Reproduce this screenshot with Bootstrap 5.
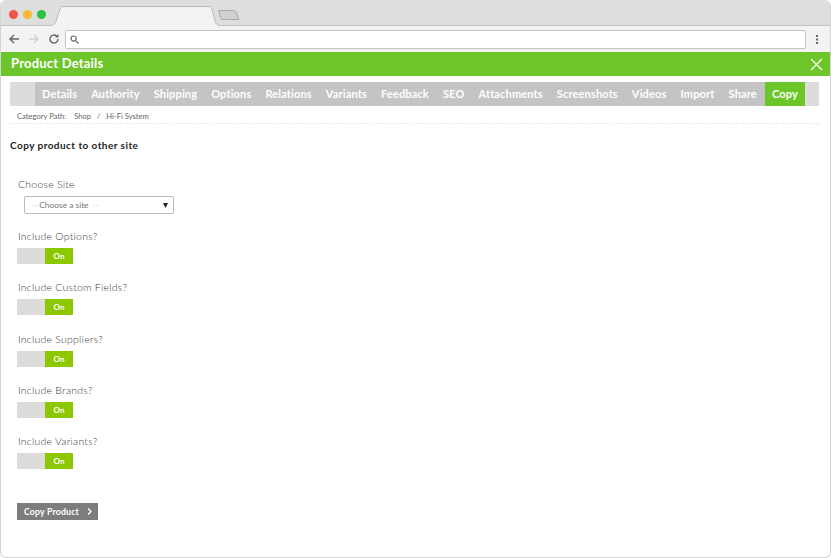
<!doctype html>
<html lang="en">

<head>
  <meta charset="utf-8">
  <meta name="viewport" content="width=device-width, initial-scale=1">
  <title>Product Details</title>

  <link href="https://cdn.jsdelivr.net/npm/bootstrap@5.3.0/dist/css/bootstrap.min.css" rel="stylesheet">

  <style>
    html, body {
      height: 100%;
      background: #fff;
    }

    body {
      font-family: Lato, "Open Sans", sans-serif;
      color: #555;
      overflow: hidden;
    }

    .browser-frame {
      height: 558px;
      border: 1px solid #d4d4d4;
      border-top: 0;
      border-radius: 6px;
      overflow: hidden;
    }

    .tab-strip {
      height: 26px;
      background: #dedede;
      border-bottom: 1px solid #c2c2c2;
      padding-left: 8px;
    }

    .dot {
      width: 9px;
      height: 9px;
      border-radius: 50%;
      margin-right: 5px;
      margin-top: 3px;
    }

    .dot-red { background: #f2544c; }
    .dot-yellow { background: #fbb934; }
    .dot-green { background: #2fc142; }

    .tab-shape {
      margin-top: 6px;
      margin-bottom: -1px;
      flex: none;
    }

    .newtab-shape {
      margin-left: -2px;
      margin-top: 9px;
      flex: none;
    }

    .tool-strip {
      height: 26px;
      background: #f3f3f3;
      padding: 0 7px;
    }

    .url-box {
      height: 19px;
      background: #fff;
      border: 1px solid #c4c4c4;
      border-radius: 2px;
      margin-left: 5px;
      margin-right: 9px;
      padding-left: 4px;
    }

    .title-bar {
      height: 24px;
      background: #6dc629;
      color: #fff;
      font-size: 13px;
      font-weight: 700;
      padding-left: 10px;
      padding-right: 7px;
      letter-spacing: .2px;
    }

    .page-body {
      padding: 6px 11px 0 9px;
    }

    .tab-row {
      height: 24px;
      background: #dcdcdc;
      padding-left: 25px;
      padding-right: 14px;
    }

    .tab-row-inner {
      background: #c4c4c4;
    }

    .tab-link {
      color: #fff;
      font-size: 11px;
      font-weight: 700;
      line-height: 24px;
      padding: 0 7px;
      letter-spacing: .15px;
      text-decoration: none;
      white-space: nowrap;
    }

    .tab-link.is-active {
      background: #6dc629;
    }

    .crumbs {
      height: 17px;
      margin-top: 1px;
      padding-left: 7px;
      border-bottom: 1px dashed #ececec;
      font-size: 7.6px;
      line-height: 18px;
      color: #666;
    }

    .crumbs span { margin-right: 4px; }
    .crumbs span:first-child { margin-right: 6px; }

    .section-title {
      font-size: 10px;
      font-weight: 700;
      color: #222;
      margin: 15px 0 0;
      line-height: 12px;
      letter-spacing: .45px;
    }

    .form-area {
      padding: 26px 0 0 7px;
    }

    .field-label {
      font-size: 10.5px;
      font-weight: 300;
      line-height: 14px;
      color: #3a3a3a;
      margin-bottom: 5px;
      padding-left: 1px;
      letter-spacing: .22px;
      display: block;
    }

    .site-select {
      width: 150px;
      height: 18px;
      margin-left: 7px;
      margin-bottom: 15px;
      padding: 0 5px 0 7px;
      font-size: 8.4px;
      color: #777;
      border: 1px solid #bbb;
      border-radius: 2px;
      background: #fff;
    }

    .site-select .dash {
      color: #d4d4d4;
      margin-right: 1px;
    }

    .toggle-box {
      width: 56px;
      height: 16px;
    }

    .toggle-off {
      width: 28px;
      background: #dcdcdc;
    }

    .toggle-on {
      width: 28px;
      background: #8cc800;
      color: #fff;
      font-size: 8px;
      font-weight: 700;
      line-height: 16px;
      text-align: center;
    }

    .toggle-group { margin-bottom: 16.25px; }

    .copy-btn {
      width: 81px;
      height: 17px;
      margin-top: 34px;
      padding: 0 0 0 7px;
      background: #7d7d7d;
      border: 0;
      border-radius: 0;
      color: #fff;
      font-size: 8.7px;
      font-weight: 700;
      line-height: 17px;
      letter-spacing: .2px;
    }

    .copy-btn:hover { background: #7d7d7d; color: #fff; }
  </style>
</head>

<body>
  <div class="browser-frame d-flex flex-column">
    <div class="tab-strip d-flex align-items-center">
      <span class="dot dot-red"></span>
      <span class="dot dot-yellow"></span>
      <span class="dot dot-green"></span>
      <svg class="tab-shape align-self-start" width="168" height="20" viewBox="0 0 168 20">
        <path d="M0 19.5 C3 19 4 18 5 15 L9 3 C10 1 11 .5 13 .5 H157 C159 .5 160 1 161 3 L164 15 C165 18 166 19 168 19.5 Z" fill="#f3f3f3" stroke="#b9b9b9" />
        <path d="M1 19.5 H167" stroke="#f3f3f3" />
      </svg>
      <svg class="newtab-shape align-self-start" width="24" height="12" viewBox="0 0 24 12">
        <path d="M1.5 1.5 H17 C18 1.5 18.5 2 19 3 L22 10.5 H5 C4.5 10.5 4 10 3.8 9.5 Z" fill="#d0d0d0" stroke="#a9a9a9" />
      </svg>
    </div>

    <div class="tool-strip d-flex align-items-center">
      <svg width="12" height="12" viewBox="0 0 12 12" fill="none" stroke="#666" stroke-width="1.4">
        <path d="M11 6 H2 M6 2 L2 6 L6 10" />
      </svg>
      <svg class="ms-2" width="12" height="12" viewBox="0 0 12 12" fill="none" stroke="#cfcfcf" stroke-width="1.4">
        <path d="M1 6 H10 M6 2 L10 6 L6 10" />
      </svg>
      <svg class="ms-2" width="12" height="12" viewBox="0 0 12 12" fill="none" stroke="#666" stroke-width="1.4">
        <path d="M10 6 A4 4 0 1 1 8.8 3.2" />
        <path d="M10.5 1 V4.5 H7 Z" fill="#666" stroke="none" />
      </svg>
      <div class="url-box flex-grow-1 d-flex align-items-center">
        <svg width="9" height="9" viewBox="0 0 9 9" fill="none" stroke="#666" stroke-width="1.2">
          <circle cx="3.6" cy="3.6" r="2.6" />
          <path d="M5.6 5.6 L8.5 8.5" />
        </svg>
      </div>
      <svg class="me-1" width="4" height="11" viewBox="0 0 4 11" fill="#666">
        <rect x="1" y="1" width="2" height="2" />
        <rect x="1" y="4.5" width="2" height="2" />
        <rect x="1" y="8" width="2" height="2" />
      </svg>
    </div>

    <div class="title-bar d-flex align-items-center justify-content-between">
      <span>Product Details</span>
      <svg width="13" height="13" viewBox="0 0 13 13" stroke="#fff" stroke-width="1.2">
        <path d="M1 1 L12 12 M12 1 L1 12" />
      </svg>
    </div>

    <div class="page-body flex-grow-1">
      <nav class="tab-row">
        <div class="tab-row-inner d-flex">
          <a class="tab-link" href="#">Details</a>
          <a class="tab-link" href="#">Authority</a>
          <a class="tab-link" href="#">Shipping</a>
          <a class="tab-link" href="#">Options</a>
          <a class="tab-link" href="#">Relations</a>
          <a class="tab-link" href="#">Variants</a>
          <a class="tab-link" href="#">Feedback</a>
          <a class="tab-link" href="#">SEO</a>
          <a class="tab-link" href="#">Attachments</a>
          <a class="tab-link" href="#">Screenshots</a>
          <a class="tab-link" href="#">Videos</a>
          <a class="tab-link" href="#">Import</a>
          <a class="tab-link" href="#">Share</a>
          <a class="tab-link is-active ms-auto" href="#">Copy</a>
        </div>
      </nav>

      <div class="crumbs"><span>Category Path:</span> <span>Shop</span> <span>/</span> <span>Hi-Fi System</span></div>

      <h2 class="section-title">Copy product to other site</h2>

      <form class="form-area">
        <label class="field-label">Choose Site</label>
        <button type="button" class="btn site-select d-flex align-items-center">
          <span class="dash">--</span>Choose a site<span class="dash ms-1">--</span>
          <svg class="ms-auto" width="5" height="5" viewBox="0 0 5 5" fill="#222"><path d="M0 0 H5 L2.5 5 Z" /></svg>
        </button>

        <div class="toggle-group">
          <label class="field-label">Include Options?</label>
          <div class="toggle-box d-flex"><div class="toggle-off"></div><div class="toggle-on">On</div></div>
        </div>

        <div class="toggle-group">
          <label class="field-label">Include Custom Fields?</label>
          <div class="toggle-box d-flex"><div class="toggle-off"></div><div class="toggle-on">On</div></div>
        </div>

        <div class="toggle-group">
          <label class="field-label">Include Suppliers?</label>
          <div class="toggle-box d-flex"><div class="toggle-off"></div><div class="toggle-on">On</div></div>
        </div>

        <div class="toggle-group">
          <label class="field-label">Include Brands?</label>
          <div class="toggle-box d-flex"><div class="toggle-off"></div><div class="toggle-on">On</div></div>
        </div>

        <div class="toggle-group">
          <label class="field-label">Include Variants?</label>
          <div class="toggle-box d-flex"><div class="toggle-off"></div><div class="toggle-on">On</div></div>
        </div>

        <button type="button" class="btn copy-btn d-flex align-items-center">Copy Product
          <svg class="ms-2" width="5" height="7" viewBox="0 0 5 7" fill="none" stroke="#fff" stroke-width="1.3"><path d="M1 .5 L4 3.5 L1 6.5" /></svg>
        </button>
      </form>
    </div>
  </div>

  <script src="https://cdn.jsdelivr.net/npm/bootstrap@5.3.0/dist/js/bootstrap.bundle.min.js"></script>
</body>

</html>
